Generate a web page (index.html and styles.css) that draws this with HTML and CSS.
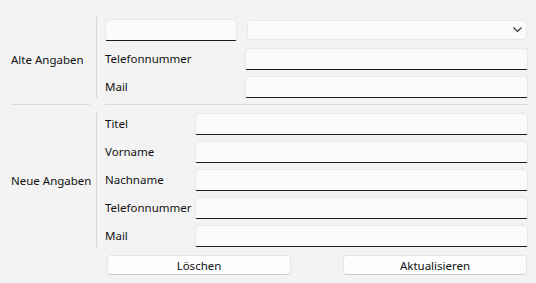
FILE: index.html
```html
<!DOCTYPE html>
<html lang="de">
<head>
    <meta charset="UTF-8">
    <title>Kontakt aktualisieren</title>
    <link rel="stylesheet" href="styles.css">
</head>
<body>

<main class="form">
    <!-- Alte Angaben -->
    <section class="group group-old">
        <div class="group-label">Alte Angaben</div>
        <div class="vline"></div>
        <div class="fields fields-old">
            <input class="text-input search-input" type="text">
            <div class="combo">
                <svg class="chevron" width="9" height="6" viewBox="0 0 9 6">
                    <path d="M0.5 0.5 L4.5 4.5 L8.5 0.5" fill="none" stroke="#333" stroke-width="1.1"/>
                </svg>
            </div>
            <label class="field-label">Telefonnummer</label>
            <input class="text-input" type="text">
            <label class="field-label">Mail</label>
            <input class="text-input" type="text">
        </div>
    </section>

    <div class="divider">
        <div class="hline hline-left"></div>
        <div class="hline hline-right"></div>
    </div>

    <!-- Neue Angaben -->
    <section class="group group-new">
        <div class="group-label">Neue Angaben</div>
        <div class="vline"></div>
        <div class="fields fields-new">
            <label class="field-label">Titel</label>
            <input class="text-input" type="text">
            <label class="field-label">Vorname</label>
            <input class="text-input" type="text">
            <label class="field-label">Nachname</label>
            <input class="text-input" type="text">
            <label class="field-label">Telefonnummer</label>
            <input class="text-input" type="text">
            <label class="field-label">Mail</label>
            <input class="text-input" type="text">
        </div>
    </section>

    <div class="actions">
        <button class="btn" type="button">Löschen</button>
        <button class="btn" type="button">Aktualisieren</button>
    </div>
</main>

</body>
</html>
```

FILE: styles.css
```css
body {
    margin: 0;
    background-color: #f3f3f3; /* window background */
    font-family: "Noto Sans", "Open Sans", sans-serif;
    font-size: 11.5px;
    color: #111111;
}

.form {
    padding: 17px 8px 0 11px;
}

.group {
    display: flex;
}

.group-label {
    width: 85px;
    display: flex;
    align-items: center;
}

.group-old .group-label {
    padding-top: 4px;
}

.vline {
    width: 1px;
    background-color: #d6d6d6;
    margin-right: 8px;
}

.fields {
    flex: 1;
    display: grid;
    row-gap: 6px;
    align-items: center;
}

.fields-old {
    padding-top: 2px;
    grid-template-columns: 140px 1fr;
    grid-template-rows: 23px 22px 22px;
}

.fields-new {
    grid-template-columns: 90px 1fr;
}

.field-label {
    line-height: 22px;
}

.text-input {
    box-sizing: border-box;
    height: 22px;
    width: 100%;
    margin: 0;
    background-color: #fbfbfb;
    border: 1px solid #e8e8e8;
    border-bottom: 1px solid #1a1a1a;
    border-radius: 4px 4px 2px 2px;
    font: inherit;
    outline: none;
}

.search-input {
    width: 132px;
    align-self: start;
}

.combo {
    box-sizing: border-box;
    height: 20px;
    margin-left: 2px;
    margin-right: 1px;
    align-self: start;
    margin-top: 1px;
    background-color: #fbfbfb;
    border: 1px solid #e8e8e8;
    border-radius: 4px;
    display: flex;
    align-items: center;
    justify-content: flex-end;
    padding-right: 4px;
}

.chevron {
    display: block;
}

.divider {
    display: flex;
    margin: 6px 0 8px;
}

.hline {
    height: 1px;
    background-color: #dadada;
}

.hline-left {
    width: 79px;
}

.hline-right {
    flex: 1;
    margin-left: 15px;
}

.actions {
    display: flex;
    gap: 52px;
    padding-left: 96px;
    margin-top: 8px;
}

.btn {
    box-sizing: border-box;
    width: 184px;
    height: 20px;
    padding: 0;
    background-color: #fdfdfd;
    border: 1px solid #e5e5e5;
    border-bottom-color: #cccccc;
    border-radius: 4px;
    font: inherit;
    color: #111111;
}
```
